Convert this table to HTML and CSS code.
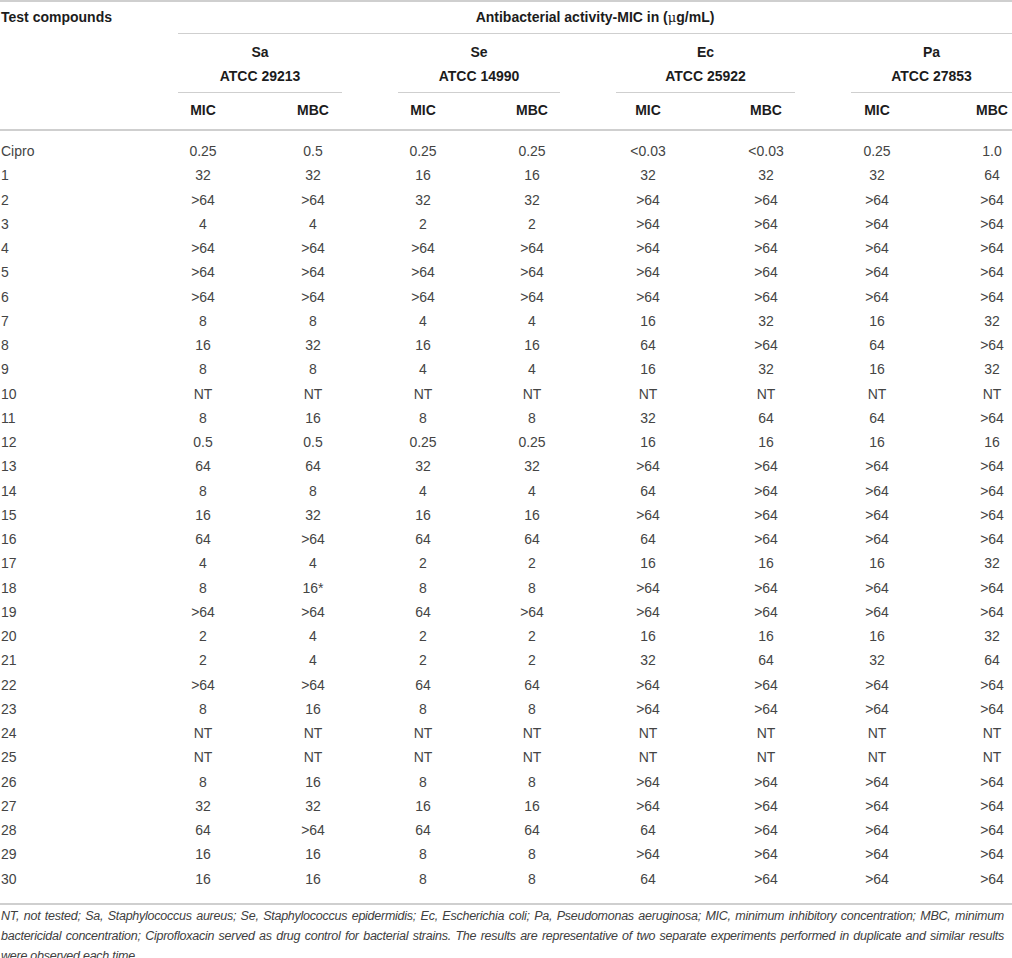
FILE: index.html
```html
<!DOCTYPE html>
<html lang="en">
<head>
<meta charset="utf-8">
<title>Antibacterial activity</title>
<link rel="stylesheet" href="styles.css">
</head>
<body>
<div class="tbl">
  <div class="head-top">
    <div class="tc">Test compounds</div>
    <div class="abx">
      <div class="abx-title">Antibacterial activity-MIC in (<span class="mu">μ</span>g/mL)</div>
      <div class="groups">
        <div class="grp"><div>Sa</div><div>ATCC 29213</div></div>
        <div class="grp"><div>Se</div><div>ATCC 14990</div></div>
        <div class="grp"><div>Ec</div><div>ATCC 25922</div></div>
        <div class="grp"><div>Pa</div><div>ATCC 27853</div></div>
      </div>
    </div>
  </div>
  <div class="row subs">
    <div class="lbl"></div><div class="c">MIC</div><div class="c">MBC</div><div class="c">MIC</div><div class="c">MBC</div><div class="c">MIC</div><div class="c">MBC</div><div class="c">MIC</div><div class="c last">MBC</div>
  </div>
  <div class="tbody">
    <div class="row"><div class="lbl">Cipro</div><div class="c">0.25</div><div class="c">0.5</div><div class="c">0.25</div><div class="c">0.25</div><div class="c">&lt;0.03</div><div class="c">&lt;0.03</div><div class="c">0.25</div><div class="c last">1.0</div></div>
    <div class="row"><div class="lbl">1</div><div class="c">32</div><div class="c">32</div><div class="c">16</div><div class="c">16</div><div class="c">32</div><div class="c">32</div><div class="c">32</div><div class="c last">64</div></div>
    <div class="row"><div class="lbl">2</div><div class="c">&gt;64</div><div class="c">&gt;64</div><div class="c">32</div><div class="c">32</div><div class="c">&gt;64</div><div class="c">&gt;64</div><div class="c">&gt;64</div><div class="c last">&gt;64</div></div>
    <div class="row"><div class="lbl">3</div><div class="c">4</div><div class="c">4</div><div class="c">2</div><div class="c">2</div><div class="c">&gt;64</div><div class="c">&gt;64</div><div class="c">&gt;64</div><div class="c last">&gt;64</div></div>
    <div class="row"><div class="lbl">4</div><div class="c">&gt;64</div><div class="c">&gt;64</div><div class="c">&gt;64</div><div class="c">&gt;64</div><div class="c">&gt;64</div><div class="c">&gt;64</div><div class="c">&gt;64</div><div class="c last">&gt;64</div></div>
    <div class="row"><div class="lbl">5</div><div class="c">&gt;64</div><div class="c">&gt;64</div><div class="c">&gt;64</div><div class="c">&gt;64</div><div class="c">&gt;64</div><div class="c">&gt;64</div><div class="c">&gt;64</div><div class="c last">&gt;64</div></div>
    <div class="row"><div class="lbl">6</div><div class="c">&gt;64</div><div class="c">&gt;64</div><div class="c">&gt;64</div><div class="c">&gt;64</div><div class="c">&gt;64</div><div class="c">&gt;64</div><div class="c">&gt;64</div><div class="c last">&gt;64</div></div>
    <div class="row"><div class="lbl">7</div><div class="c">8</div><div class="c">8</div><div class="c">4</div><div class="c">4</div><div class="c">16</div><div class="c">32</div><div class="c">16</div><div class="c last">32</div></div>
    <div class="row"><div class="lbl">8</div><div class="c">16</div><div class="c">32</div><div class="c">16</div><div class="c">16</div><div class="c">64</div><div class="c">&gt;64</div><div class="c">64</div><div class="c last">&gt;64</div></div>
    <div class="row"><div class="lbl">9</div><div class="c">8</div><div class="c">8</div><div class="c">4</div><div class="c">4</div><div class="c">16</div><div class="c">32</div><div class="c">16</div><div class="c last">32</div></div>
    <div class="row"><div class="lbl">10</div><div class="c">NT</div><div class="c">NT</div><div class="c">NT</div><div class="c">NT</div><div class="c">NT</div><div class="c">NT</div><div class="c">NT</div><div class="c last">NT</div></div>
    <div class="row"><div class="lbl">11</div><div class="c">8</div><div class="c">16</div><div class="c">8</div><div class="c">8</div><div class="c">32</div><div class="c">64</div><div class="c">64</div><div class="c last">&gt;64</div></div>
    <div class="row"><div class="lbl">12</div><div class="c">0.5</div><div class="c">0.5</div><div class="c">0.25</div><div class="c">0.25</div><div class="c">16</div><div class="c">16</div><div class="c">16</div><div class="c last">16</div></div>
    <div class="row"><div class="lbl">13</div><div class="c">64</div><div class="c">64</div><div class="c">32</div><div class="c">32</div><div class="c">&gt;64</div><div class="c">&gt;64</div><div class="c">&gt;64</div><div class="c last">&gt;64</div></div>
    <div class="row"><div class="lbl">14</div><div class="c">8</div><div class="c">8</div><div class="c">4</div><div class="c">4</div><div class="c">64</div><div class="c">&gt;64</div><div class="c">&gt;64</div><div class="c last">&gt;64</div></div>
    <div class="row"><div class="lbl">15</div><div class="c">16</div><div class="c">32</div><div class="c">16</div><div class="c">16</div><div class="c">&gt;64</div><div class="c">&gt;64</div><div class="c">&gt;64</div><div class="c last">&gt;64</div></div>
    <div class="row"><div class="lbl">16</div><div class="c">64</div><div class="c">&gt;64</div><div class="c">64</div><div class="c">64</div><div class="c">64</div><div class="c">&gt;64</div><div class="c">&gt;64</div><div class="c last">&gt;64</div></div>
    <div class="row"><div class="lbl">17</div><div class="c">4</div><div class="c">4</div><div class="c">2</div><div class="c">2</div><div class="c">16</div><div class="c">16</div><div class="c">16</div><div class="c last">32</div></div>
    <div class="row"><div class="lbl">18</div><div class="c">8</div><div class="c">16*</div><div class="c">8</div><div class="c">8</div><div class="c">&gt;64</div><div class="c">&gt;64</div><div class="c">&gt;64</div><div class="c last">&gt;64</div></div>
    <div class="row"><div class="lbl">19</div><div class="c">&gt;64</div><div class="c">&gt;64</div><div class="c">64</div><div class="c">&gt;64</div><div class="c">&gt;64</div><div class="c">&gt;64</div><div class="c">&gt;64</div><div class="c last">&gt;64</div></div>
    <div class="row"><div class="lbl">20</div><div class="c">2</div><div class="c">4</div><div class="c">2</div><div class="c">2</div><div class="c">16</div><div class="c">16</div><div class="c">16</div><div class="c last">32</div></div>
    <div class="row"><div class="lbl">21</div><div class="c">2</div><div class="c">4</div><div class="c">2</div><div class="c">2</div><div class="c">32</div><div class="c">64</div><div class="c">32</div><div class="c last">64</div></div>
    <div class="row"><div class="lbl">22</div><div class="c">&gt;64</div><div class="c">&gt;64</div><div class="c">64</div><div class="c">64</div><div class="c">&gt;64</div><div class="c">&gt;64</div><div class="c">&gt;64</div><div class="c last">&gt;64</div></div>
    <div class="row"><div class="lbl">23</div><div class="c">8</div><div class="c">16</div><div class="c">8</div><div class="c">8</div><div class="c">&gt;64</div><div class="c">&gt;64</div><div class="c">&gt;64</div><div class="c last">&gt;64</div></div>
    <div class="row"><div class="lbl">24</div><div class="c">NT</div><div class="c">NT</div><div class="c">NT</div><div class="c">NT</div><div class="c">NT</div><div class="c">NT</div><div class="c">NT</div><div class="c last">NT</div></div>
    <div class="row"><div class="lbl">25</div><div class="c">NT</div><div class="c">NT</div><div class="c">NT</div><div class="c">NT</div><div class="c">NT</div><div class="c">NT</div><div class="c">NT</div><div class="c last">NT</div></div>
    <div class="row"><div class="lbl">26</div><div class="c">8</div><div class="c">16</div><div class="c">8</div><div class="c">8</div><div class="c">&gt;64</div><div class="c">&gt;64</div><div class="c">&gt;64</div><div class="c last">&gt;64</div></div>
    <div class="row"><div class="lbl">27</div><div class="c">32</div><div class="c">32</div><div class="c">16</div><div class="c">16</div><div class="c">&gt;64</div><div class="c">&gt;64</div><div class="c">&gt;64</div><div class="c last">&gt;64</div></div>
    <div class="row"><div class="lbl">28</div><div class="c">64</div><div class="c">&gt;64</div><div class="c">64</div><div class="c">64</div><div class="c">64</div><div class="c">&gt;64</div><div class="c">&gt;64</div><div class="c last">&gt;64</div></div>
    <div class="row"><div class="lbl">29</div><div class="c">16</div><div class="c">16</div><div class="c">8</div><div class="c">8</div><div class="c">&gt;64</div><div class="c">&gt;64</div><div class="c">&gt;64</div><div class="c last">&gt;64</div></div>
    <div class="row"><div class="lbl">30</div><div class="c">16</div><div class="c">16</div><div class="c">8</div><div class="c">8</div><div class="c">64</div><div class="c">&gt;64</div><div class="c">&gt;64</div><div class="c last">&gt;64</div></div>
  </div>
  <p class="note">NT, not tested; Sa, Staphylococcus aureus; Se, Staphylococcus epidermidis; Ec, Escherichia coli; Pa, Pseudomonas aeruginosa; MIC, minimum inhibitory concentration; MBC, minimum bactericidal concentration; Ciprofloxacin served as drug control for bacterial strains. The results are representative of two separate experiments performed in duplicate and similar results were observed each time.</p>
</div>
</body>
</html>
```

FILE: styles.css
```css
html, body {
  margin: 0;
  padding: 0;
  background: #ffffff;
}

body {
  width: 1012px;
  overflow: hidden;
  font-family: "Liberation Sans", Arial, Helvetica, sans-serif;
  font-size: 14px;
  color: #444444;
}

.tbl {
  border-top: 2px solid #cfcfcf;
}

.head-top {
  display: grid;
  grid-template-columns: 178px 1fr;
}

.tc {
  font-weight: bold;
  color: #1c1c1c;
  line-height: 31px;
  padding-left: 1px;
}

.abx-title {
  height: 31px;
  line-height: 31px;
  text-align: center;
  font-weight: bold;
  color: #1c1c1c;
  border-bottom: 1px solid #cfcfcf;
}

.mu {
  font-family: "DejaVu Serif", "Liberation Serif", serif;
  font-weight: normal;
  font-size: 13px;
}

.groups {
  display: grid;
  grid-template-columns: 164px 162px 179px 1fr;
  column-gap: 56px;
}

.grp {
  padding: 6px 0 4px;
  line-height: 24px;
  text-align: center;
  font-weight: bold;
  color: #1c1c1c;
  border-bottom: 1px solid #cfcfcf;
}

.row {
  display: grid;
  grid-template-columns: 148px 110px 110px 110px 108px 124px 112px 110px 80px;
  line-height: 24.25px;
}

.row.subs {
  line-height: 24px;
  padding: 5px 0 7px;
  font-weight: bold;
  color: #1c1c1c;
  border-bottom: 2px solid #cfcfcf;
}

.lbl {
  padding-left: 1px;
  white-space: nowrap;
}

.c {
  text-align: center;
  white-space: nowrap;
}

.c.last {
  padding-left: 40px;
}

.tbody {
  padding: 8px 0 12px;
  border-bottom: 2px solid #cfcfcf;
}

.note {
  margin: 0;
  padding: 1px 8px 0 1px;
  font-family: "Liberation Sans", Arial, sans-serif;
  font-style: italic;
  font-size: 12.5px;
  letter-spacing: -0.25px;
  line-height: 20px;
  color: #404040;
  text-align: justify;
}
```
